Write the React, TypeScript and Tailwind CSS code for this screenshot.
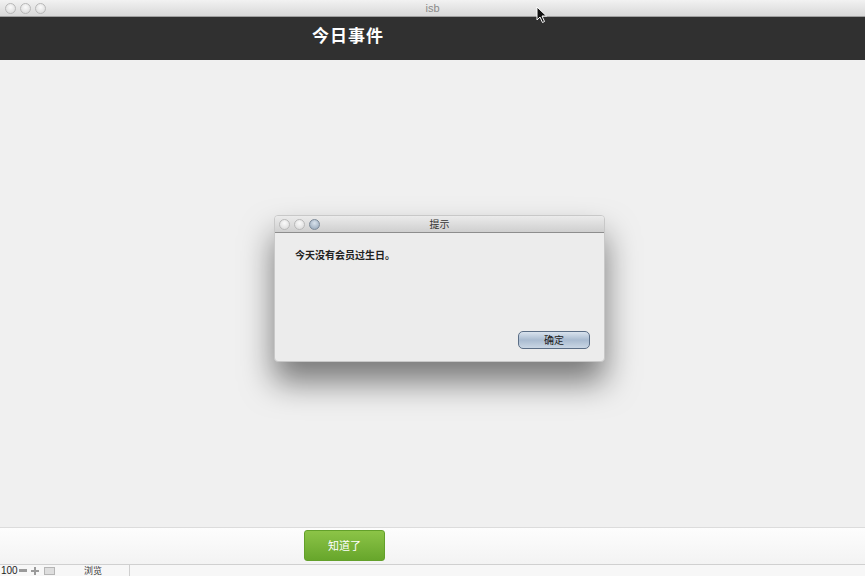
import { CSSProperties } from "react";

const cjk = { fontFamily: '"Noto Sans CJK SC", "Liberation Sans", sans-serif' } as CSSProperties;

const Light = ({ tone = "gray" }: { tone?: "gray" | "blue" }) => (
  <span
    className={`block w-[11px] h-[11px] rounded-full border ${
      tone === "blue"
        ? "border-[#7d8a98] bg-[radial-gradient(circle_at_50%_35%,#d8e2ec,#8fa1b4)]"
        : "border-[#b8b8b8] bg-[radial-gradient(circle_at_50%_35%,#fafafa,#d6d6d6)]"
    }`}
  />
);

const Cursor = () => (
  <svg width="12" height="18" viewBox="0 0 12 18" className="absolute left-[536px] top-[6px]">
    <path d="M1 1 L1 14 L4 11 L6.5 16.5 L8.5 15.5 L6 10 L10.5 10 Z" fill="#111" stroke="#fff" strokeWidth="1" />
  </svg>
);

export default function App() {
  return (
    <div className="relative w-[865px] h-[576px] overflow-hidden flex flex-col bg-[#efefef]" style={cjk}>
      {/* window chrome */}
      <div className="h-[17px] flex items-center px-[5px] bg-gradient-to-b from-[#f2f2f2] to-[#d8d8d8] border-b border-[#9f9f9f] relative">
        <div className="flex gap-[4px]">
          <Light />
          <Light />
          <Light />
        </div>
        <span className="absolute left-1/2 -translate-x-1/2 top-0 text-[11px] leading-[17px] text-[#8a8a8a]" style={{ fontFamily: '"Liberation Sans", sans-serif' }}>
          isb
        </span>
      </div>

      {/* header */}
      <div className="h-[43px] bg-[#303030] flex items-start pt-[5px] pl-[312px]">
        <span className="text-white text-[17px] font-bold tracking-[1px]">今日事件</span>
      </div>

      <div className="flex-1 bg-[#f0f0f0]" />

      {/* footer */}
      <div className="h-[37px] border-t border-[#dcdcdc] bg-gradient-to-b from-[#fdfdfd] to-[#f3f3f3] flex items-start pt-[2px] pl-[304px]">
        <button className="w-[81px] h-[31px] rounded-[3px] bg-gradient-to-b from-[#8cc447] to-[#67a62b] border border-[#63a02a] text-white text-[11px]">
          知道了
        </button>
      </div>

      {/* status bar */}
      <div className="h-[12px] flex items-center bg-[#f7f7f7] border-t border-[#d0d0d0] text-[10px] leading-[12px] text-[#222]">
        <span className="pl-[1px] w-[19px]" style={{ fontFamily: '"Liberation Sans", sans-serif' }}>100</span>
        <span className="w-[8px] h-[3px] bg-[#9a9a9a]" />
        <span className="ml-[4px] relative w-[8px] h-[8px]">
          <span className="absolute left-0 top-[3px] w-[8px] h-[2px] bg-[#9a9a9a]" />
          <span className="absolute left-[3px] top-0 w-[2px] h-[8px] bg-[#9a9a9a]" />
        </span>
        <span className="ml-[5px] w-[11px] h-[8px] border border-[#b5b5b5] bg-[#dedede]" />
        <span className="ml-[29px] text-[9px] text-[#333]">浏览</span>
        <span className="ml-[27px] h-full border-l border-[#cfcfcf]" />
      </div>

      {/* alert dialog */}
      <div className="absolute left-[274px] top-[215px] w-[331px] h-[147px] rounded-[4px] bg-[#ececec] shadow-[0_20px_32px_rgba(0,0,0,0.5)] flex flex-col overflow-hidden border border-[#c8c8c8]">
        <div className="h-[17px] bg-gradient-to-b from-[#ebebeb] to-[#cfcfcf] border-b border-[#8d8d8d] relative flex items-center px-[4px]">
          <div className="flex gap-[4px]">
            <Light />
            <Light />
            <Light tone="blue" />
          </div>
          <span className="absolute left-1/2 -translate-x-1/2 top-0 text-[10px] leading-[16px] text-[#333]">提示</span>
        </div>
        <div className="flex-1 flex flex-col px-[20px] pt-[14px] pb-[12px]">
          <p className="text-[10px] font-bold text-[#222]">今天没有会员过生日。</p>
          <div className="mt-auto flex justify-end">
            <button className="w-[72px] h-[18px] rounded-[5px] border border-[#5b6e86] bg-gradient-to-b from-[#d9e3ee] via-[#a9bbd0] to-[#c9d6e4] text-[10px] text-[#1a1a1a] leading-[16px] mr-[-6px]">
              确定
            </button>
          </div>
        </div>
      </div>

      <Cursor />
    </div>
  );
}
